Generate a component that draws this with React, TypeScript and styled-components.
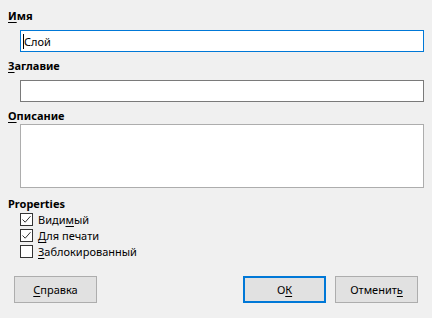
import React from 'react';
import styled, { createGlobalStyle } from 'styled-components';

const GlobalStyle = createGlobalStyle`
  html, body {
    margin: 0;
    padding: 0;
    background: #f0f0f0;
  }
  body {
    font-family: "Noto Sans", "Open Sans", sans-serif;
    font-size: 11px;
    color: #000;
  }
`;

const Dialog = styled.div`
  width: 432px;
  height: 318px;
  box-sizing: border-box;
  padding: 8px 8px 0 8px;
  display: flex;
  flex-direction: column;
`;

const Label = styled.div<{ $top?: number; $h?: number }>`
  font-weight: bold;
  line-height: ${(p) => p.$h ?? 16}px;
  height: ${(p) => p.$h ?? 16}px;
  margin-top: ${(p) => p.$top ?? 0}px;
`;

const Mn = styled.span`
  text-decoration: underline;
  text-underline-offset: 2px;
`;

const Field = styled.div<{ $focused?: boolean; $top?: number }>`
  margin-top: ${(p) => p.$top ?? 6}px;
  margin-left: 12px;
  height: 22px;
  box-sizing: border-box;
  background: #fff;
  border: 1px solid ${(p) => (p.$focused ? '#0078d7' : '#7a7a7a')};
  display: flex;
  align-items: center;
  padding-left: 2px;
`;

const Caret = styled.span`
  display: inline-block;
  width: 1px;
  height: 15px;
  background: #000;
`;

const Area = styled.div`
  margin-left: 12px;
  height: 64px;
  box-sizing: border-box;
  background: #fff;
  border: 1px solid #adadad;
`;

const Checks = styled.div`
  display: flex;
  flex-direction: column;
  padding-left: 12px;
`;

const CheckRow = styled.label`
  display: flex;
  align-items: center;
  height: 16px;
  gap: 5px;
`;

const Box = styled.span`
  width: 13px;
  height: 13px;
  box-sizing: border-box;
  border: 1px solid #333;
  background: #fff;
  display: flex;
  align-items: center;
  justify-content: center;
`;

const Buttons = styled.div`
  display: flex;
  margin-top: 17px;
  padding: 0 6px;
  gap: 9px;
`;

const Spacer = styled.div`
  flex: 1;
`;

const Button = styled.div<{ $default?: boolean }>`
  width: 83px;
  height: 27px;
  box-sizing: border-box;
  background: #e1e1e1;
  border: ${(p) => (p.$default ? '2px solid #0078d7' : '1px solid #adadad')};
  display: flex;
  align-items: center;
  justify-content: center;
`;

function Check({ checked, children }: { checked?: boolean; children: React.ReactNode }) {
  return (
    <CheckRow>
      <Box>
        {checked && (
          <svg width="11" height="11" viewBox="0 0 11 11">
            <path d="M1.5 5.5 L4.2 8.2 L9.5 2.2" fill="none" stroke="#333" strokeWidth="1" />
          </svg>
        )}
      </Box>
      <span>{children}</span>
    </CheckRow>
  );
}

export default function App() {
  return (
    <>
      <GlobalStyle />
      <Dialog>
        <Label>
          <Mn>И</Mn>мя
        </Label>
        <Field $focused>
          <Caret />
          Слой
        </Field>
        <Label $top={6}>
          <Mn>З</Mn>аглавие
        </Label>
        <Field />
        <Label $top={6}>
          <Mn>О</Mn>писание
        </Label>
        <Area />
        <Label $top={9} $h={14}>Properties</Label>
        <Checks>
          <Check checked>
            Види<Mn>м</Mn>ый
          </Check>
          <Check checked>
            <Mn>Д</Mn>ля печати
          </Check>
          <Check>
            <Mn>З</Mn>аблокированный
          </Check>
        </Checks>
        <Buttons>
          <Button>
            <span>
              <Mn>С</Mn>правка
            </span>
          </Button>
          <Spacer />
          <Button $default>
            <span>
              О<Mn>К</Mn>
            </span>
          </Button>
          <Button>
            <span>
              Отменит<Mn>ь</Mn>
            </span>
          </Button>
        </Buttons>
      </Dialog>
    </>
  );
}
